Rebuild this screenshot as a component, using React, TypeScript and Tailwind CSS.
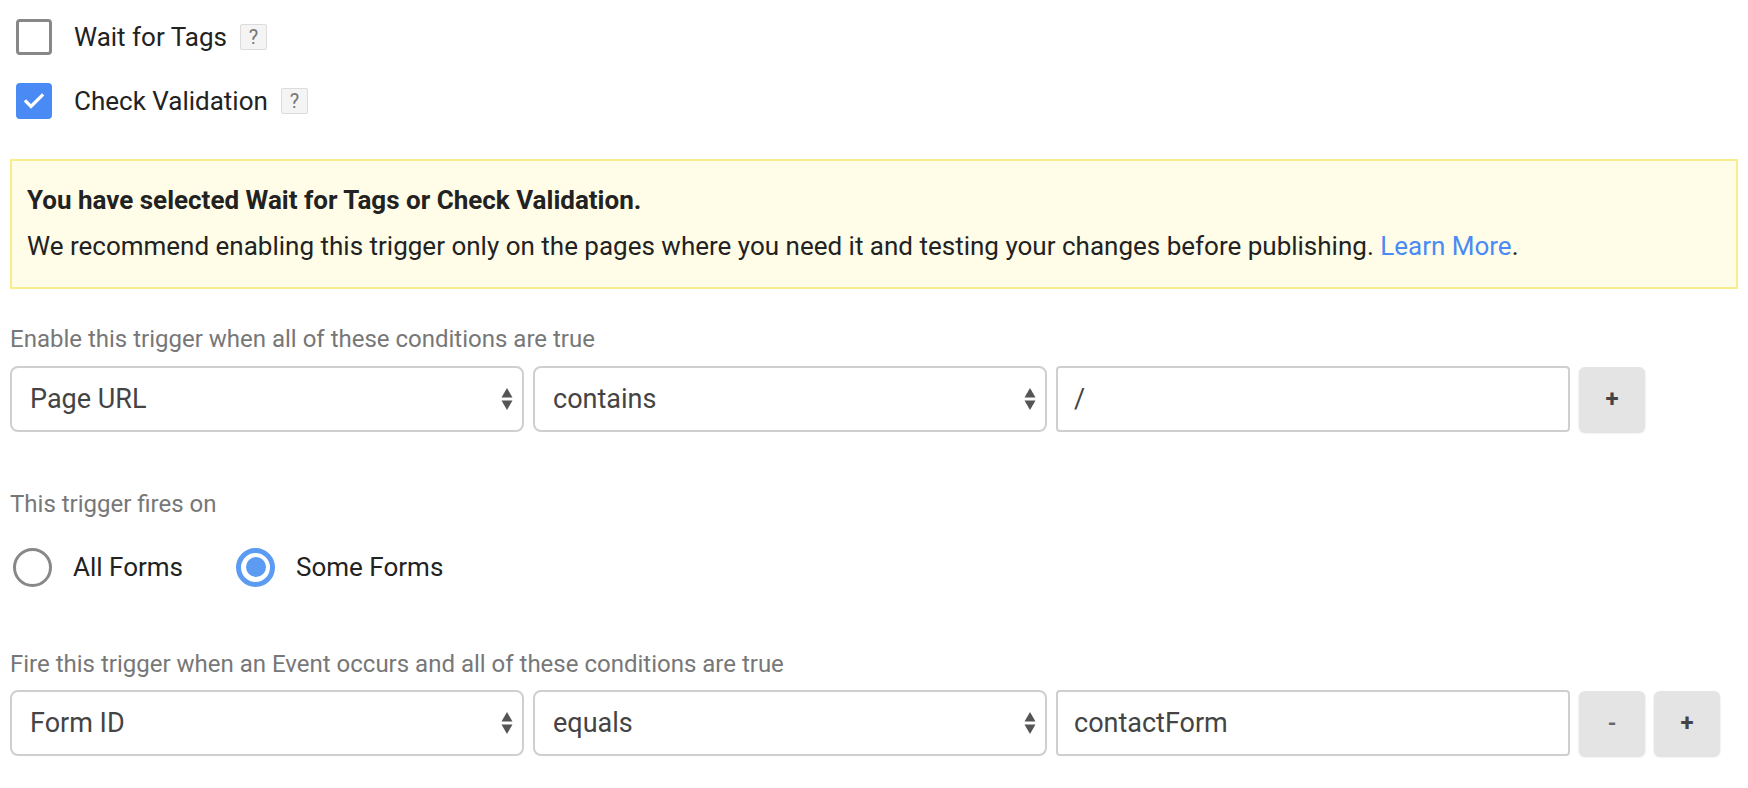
import React from 'react';

const font = { fontFamily: 'Roboto, "Liberation Sans", sans-serif' };

const Help = () => (
  <span className="ml-[13px] inline-flex h-[26px] w-[27px] items-center justify-center rounded-[2px] border border-[#dcdcdc] bg-[#f4f4f4] text-[20px] text-[#777]">
    ?
  </span>
);

const Checkbox = ({ checked, label }: { checked?: boolean; label: string }) => (
  <div className="flex h-[36px] items-center">
    {checked ? (
      <span className="ml-[16px] flex h-[36px] w-[36px] items-center justify-center rounded-[4px] bg-[#4a8af4]">
        <svg width="24" height="24" viewBox="0 0 24 24" fill="none">
          <path d="M4 12.5l5 5L20 6.5" stroke="#fff" strokeWidth="3.2" strokeLinecap="square" />
        </svg>
      </span>
    ) : (
      <span className="ml-[16px] h-[36px] w-[36px] rounded-[4px] border-[3px] border-[#888]" />
    )}
    <span className="ml-[22px] text-[26px] text-[#222]">{label}</span>
    <Help />
  </div>
);

const Arrows = () => (
  <svg width="12" height="24" viewBox="0 0 12 24" className="shrink-0">
    <path d="M6 1L11.5 10.5H0.5Z" fill="#555" />
    <path d="M6 23L11.5 13.5H0.5Z" fill="#555" />
  </svg>
);

const Select = ({ value }: { value: string }) => (
  <div className="flex h-[66px] w-[514px] items-center justify-between rounded-[8px] border-2 border-[#cfcfcf] bg-white pl-[18px] pr-[9px] text-[27px] text-[#444]">
    <span>{value}</span>
    <Arrows />
  </div>
);

const Btn = ({ children, light }: { children: React.ReactNode; light?: boolean }) => (
  <button
    className={
      light
        ? 'flex h-[65px] w-[66px] items-center justify-center rounded-[6px] bg-[#e4e4e4] text-[22px] font-bold text-[#666] shadow-[0_1px_2px_rgba(0,0,0,0.15)]'
        : 'flex h-[65px] w-[66px] items-center justify-center rounded-[6px] bg-[#e4e4e4] text-[24px] font-bold text-[#444] shadow-[0_1px_2px_rgba(0,0,0,0.15)]'
    }
  >
    {children}
  </button>
);

const Row = ({ a, b, c, minus }: { a: string; b: string; c: string; minus?: boolean }) => (
  <div className="flex items-center gap-[9px] pl-[10px]">
    <Select value={a} />
    <Select value={b} />
    <div className="flex h-[66px] w-[514px] items-center rounded-[4px] border-2 border-[#cfcfcf] bg-white pl-[16px] text-[27px] text-[#444]">
      {c}
    </div>
    {minus && <Btn light>-</Btn>}
    <Btn>+</Btn>
  </div>
);

const Radio = ({ checked, label }: { checked?: boolean; label: string }) => (
  <div className="flex items-center">
    {checked ? (
      <span className="flex h-[39px] w-[39px] items-center justify-center rounded-full border-[5px] border-[#5b9bf2]">
        <span className="h-[20px] w-[20px] rounded-full bg-[#5b9bf2]" />
      </span>
    ) : (
      <span className="h-[39px] w-[39px] rounded-full border-[3px] border-[#888]" />
    )}
    <span className="ml-[21px] text-[26px] text-[#222]">{label}</span>
  </div>
);

export default function App() {
  return (
    <div className="min-h-screen w-[1748px] bg-white" style={font}>
      <div className="flex flex-col gap-[28px] pt-[19px]">
        <Checkbox label="Wait for Tags" />
        <Checkbox checked label="Check Validation" />
      </div>

      <div className="ml-[10px] mt-[40px] h-[130px] w-[1728px] border-2 border-[#f7ed8a] bg-[#fffde8] px-[15px] pt-[21px] text-[26px] text-[#222]">
        <p className="h-[36px] font-bold leading-[36px]">You have selected Wait for Tags or Check Validation.</p>
        <p className="mt-[10px] h-[36px] leading-[36px]">
          We recommend enabling this trigger only on the pages where you need it and testing your changes before publishing.{' '}
          <a className="text-[#4a8af4]">Learn More</a>.
        </p>
      </div>

      <p className="ml-[10px] mt-[36px] h-[28px] text-[24px] leading-[28px] text-[#777]">
        Enable this trigger when all of these conditions are true
      </p>
      <div className="mt-[13px]">
        <Row a="Page URL" b="contains" c="/" />
      </div>

      <p className="ml-[10px] mt-[58px] h-[28px] text-[24px] leading-[28px] text-[#777]">This trigger fires on</p>
      <div className="ml-[13px] mt-[29px] flex h-[40px] items-center gap-[53px]">
        <Radio label="All Forms" />
        <Radio checked label="Some Forms" />
      </div>

      <p className="ml-[10px] mt-[63px] h-[28px] text-[24px] leading-[28px] text-[#777]">
        Fire this trigger when an Event occurs and all of these conditions are true
      </p>
      <div className="mt-[12px]">
        <Row a="Form ID" b="equals" c="contactForm" minus />
      </div>
    </div>
  );
}
